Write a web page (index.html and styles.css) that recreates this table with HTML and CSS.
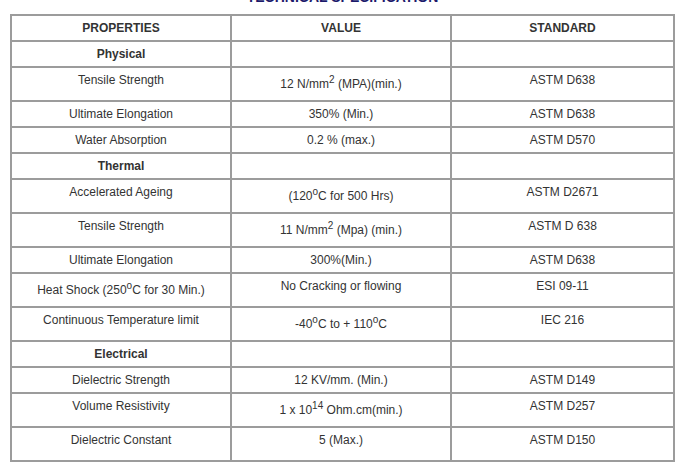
FILE: index.html
```html
<!DOCTYPE html>
<html>
<head>
<meta charset="utf-8">
<link rel="stylesheet" href="styles.css">
</head>
<body>
<div class="page">
  <h2 class="title">TECHNICAL SPECIFICATION</h2>
  <table class="spec">
    <colgroup><col class="c1"><col class="c2"><col class="c3"></colgroup>
    <thead>
      <tr><th>PROPERTIES</th><th>VALUE</th><th>STANDARD</th></tr>
    </thead>
    <tbody>
      <tr><td class="cat">Physical</td><td></td><td></td></tr>
      <tr class="tall"><td>Tensile Strength</td><td class="mid">12 N/mm<sup>2</sup> (MPA)(min.)</td><td>ASTM D638</td></tr>
      <tr><td>Ultimate Elongation</td><td>350% (Min.)</td><td>ASTM D638</td></tr>
      <tr><td>Water Absorption</td><td>0.2 % (max.)</td><td>ASTM D570</td></tr>
      <tr><td class="cat">Thermal</td><td></td><td></td></tr>
      <tr class="tall"><td>Accelerated Ageing</td><td class="mid">(120<sup>o</sup>C for 500 Hrs)</td><td>ASTM D2671</td></tr>
      <tr class="tall"><td>Tensile Strength</td><td class="mid">11 N/mm<sup>2</sup> (Mpa) (min.)</td><td>ASTM D 638</td></tr>
      <tr><td>Ultimate Elongation</td><td>300%(Min.)</td><td>ASTM D638</td></tr>
      <tr class="tall"><td class="mid">Heat Shock (250<sup>o</sup>C for 30 Min.)</td><td>No Cracking or flowing</td><td>ESI 09-11</td></tr>
      <tr class="tall"><td>Continuous Temperature limit</td><td class="mid">-40<sup>o</sup>C to + 110<sup>o</sup>C</td><td>IEC 216</td></tr>
      <tr><td class="cat">Electrical</td><td></td><td></td></tr>
      <tr><td>Dielectric Strength</td><td>12 KV/mm. (Min.)</td><td>ASTM D149</td></tr>
      <tr class="tall"><td>Volume Resistivity</td><td class="mid">1 x 10<sup>14</sup> Ohm.cm(min.)</td><td>ASTM D257</td></tr>
      <tr class="tall"><td>Dielectric Constant</td><td>5 (Max.)</td><td>ASTM D150</td></tr>
    </tbody>
  </table>
</div>
</body>
</html>
```
FILE: styles.css
```css
html, body {
  margin: 0;
  padding: 0;
  background: #ffffff;
}
body {
  font-family: "Liberation Sans", Arial, sans-serif;
  font-size: 12px;
  color: #333333;
  overflow: hidden;
}
.page {
  padding: 0 0 0 10px;
  width: 665px;
}
.title {
  margin: -11px 0 0;
  font-size: 14px;
  line-height: 16px;
  font-weight: bold;
  color: #1c1a6b;
  text-align: center;
}
.spec {
  margin-top: 9px;
  width: 665px;
  table-layout: fixed;
  border-collapse: separate;
  border-spacing: 0;
  border: 1px solid #9c9c9c;
}
.c1 { width: 220px; }
.c2 { width: 220px; }
.c3 { width: 223px; }
.spec th,
.spec td {
  border: 1px solid #9c9c9c;
  padding: 5px 6px;
  text-align: center;
  vertical-align: top;
  line-height: 14px;
  height: 14px;
}
.spec th {
  font-weight: bold;
  color: #333333;
  vertical-align: middle;
}
.spec td.cat {
  font-weight: bold;
}
.spec tr.tall {
  height: 34px;
}
.spec td.mid {
  vertical-align: middle;
}
sup {
  font-size: 10px;
  line-height: 0;
}
```
